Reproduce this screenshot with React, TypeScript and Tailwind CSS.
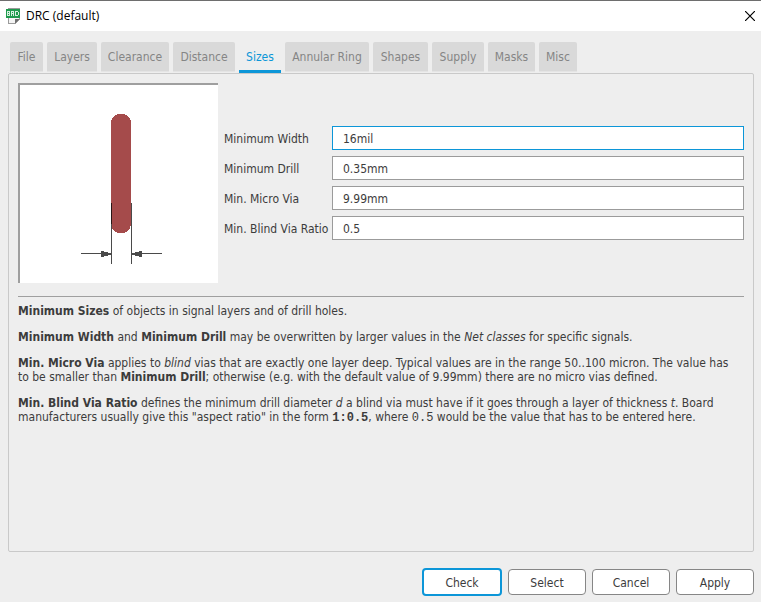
import type { ReactNode } from "react";

const tabs = [
  { name: "File", width: "w-[33px]" },
  { name: "Layers", width: "w-[50px]" },
  { name: "Clearance", width: "w-[68px]" },
  { name: "Distance", width: "w-[62px]" },
  { name: "Sizes", width: "w-[42px]" },
  { name: "Annular Ring", width: "w-[84px]" },
  { name: "Shapes", width: "w-[55px]" },
  { name: "Supply", width: "w-[52px]" },
  { name: "Masks", width: "w-[47px]" },
  { name: "Misc", width: "w-[38px]" },
];

const fields = [
  { id: "min-width", label: "Minimum Width", value: "16mil", focused: true },
  { id: "min-drill", label: "Minimum Drill", value: "0.35mm", focused: false },
  { id: "min-micro-via", label: "Min. Micro Via", value: "9.99mm", focused: false },
  { id: "min-blind-via-ratio", label: "Min. Blind Via Ratio", value: "0.5", focused: false },
];

function BoardIcon() {
  return (
    <svg width="14" height="16" viewBox="0 0 14 16" shapeRendering="crispEdges" aria-hidden="true">
      <path d="M2.5 0.5H13.5V11.5L9.5 15.5H2.5Z" fill="#f4f4f4" stroke="#9a9a9a" />
      <path d="M13 11H9V15Z" fill="#6f6f6f" />
      <rect x="0" y="1" width="14" height="9" fill="#1f9a4d" />
      <g stroke="#d5f0df" fill="none">
        <path d="M1.5 3V8M1 3.5H4M1 5.5H4M1 7.5H4M3.5 3V8" />
        <path d="M5.5 3V8M5 3.5H8M5 5.5H8M7.5 3V5M7.5 6V8" />
        <path d="M9.5 3V8M9 3.5H12M9 7.5H12M12.5 4V7" />
      </g>
    </svg>
  );
}

function WidthDrawing() {
  return (
    <svg width="198" height="198" viewBox="0 0 198 198" aria-label="Track width drawing" role="img">
      <rect x="91" y="29" width="20" height="119" rx="9" fill="#a54b4b" shapeRendering="crispEdges" />
      <g fill="#4a4a4a" shapeRendering="crispEdges">
        <rect x="91" y="118" width="1" height="61" />
        <rect x="111" y="118" width="1" height="61" />
        <rect x="61" y="168" width="30" height="1" />
        <rect x="112" y="168" width="30" height="1" />
        <path d="M81 166H84V167H88V168H91V170H88V171H84V172H81Z" />
        <path d="M122 166H119V167H115V168H112V170H115V171H119V172H122Z" />
        <rect x="91" y="118" width="1" height="21" fill="#2a1616" />
      </g>
    </svg>
  );
}

function DialogButton({ children, primary = false }: { children: ReactNode; primary?: boolean }) {
  return (
    <button
      type="button"
      className={
        primary
          ? "h-7 w-20 rounded border-2 border-[#0c96d8] bg-white pt-0.5"
          : "h-[26px] w-[78px] rounded border border-[#868686] bg-white pt-0.5"
      }
    >
      {children}
    </button>
  );
}

export default function App() {
  return (
    <div className="flex min-h-screen flex-col bg-[#eeeeee] font-['DejaVu_Sans_Condensed','DejaVu_Sans',sans-serif] text-[12px] leading-[14px] text-[#3c3c3c]">
      <header className="flex h-[31px] items-center border-t border-[#6e6e6e] bg-white pl-1.5 pr-1.5 font-['Open_Sans','Noto_Sans',sans-serif] text-black">
        <BoardIcon />
        <h1 className="ml-1.5 grow">DRC (default)</h1>
        <button type="button" aria-label="Close">
          <svg width="10" height="10" viewBox="0 0 10 10" aria-hidden="true">
            <path d="M0 0L10 10M10 0L0 10" stroke="#000" strokeWidth="1.2" />
          </svg>
        </button>
      </header>

      <main className="flex grow flex-col pt-[11px] pr-[7px] pl-2">
        <div role="tablist" className="flex gap-1 px-0.5">
          {tabs.map((tab) => (
            <button
              key={tab.name}
              type="button"
              role="tab"
              aria-selected={tab.name === "Sizes"}
              className={`${tab.width} ${
                tab.name === "Sizes"
                  ? "h-[31px] whitespace-nowrap border-b-3 border-[#0c96d8] pt-0.5 text-[#0c96d8]"
                  : "h-[30px] whitespace-nowrap rounded-t-xs border-b border-[#e4e4e4] bg-[#d9d9d9] text-[#858585]"
              }`}
            >
              {tab.name}
            </button>
          ))}
        </div>

        <section role="tabpanel" className="grow rounded-xs border border-[#c9c9c9] p-[9px]">
          <div className="flex items-center gap-1.5">
            <div className="size-[200px] shrink-0 border-l-2 border-t-2 border-[#9f9f9f] bg-white">
              <WidthDrawing />
            </div>
            <form className="flex grow flex-col gap-1.5">
              {fields.map((field) => (
                <div key={field.id} className="flex items-center">
                  <label htmlFor={field.id} className="w-[108px] shrink-0 whitespace-nowrap pt-0.5">
                    {field.label}
                  </label>
                  <input
                    id={field.id}
                    type="text"
                    defaultValue={field.value}
                    className={
                      field.focused
                        ? "h-6 min-w-0 grow border border-[#0c96d8] bg-white px-2.5 pt-0.5 outline-none"
                        : "h-6 min-w-0 grow border border-[#9b9b9b] bg-white px-2.5 pt-0.5 outline-none"
                    }
                  />
                </div>
              ))}
            </form>
          </div>

          <hr className="mt-[13px] mb-[7px] border-[#9f9f9f]" />

          <div className="flex flex-col gap-3 pr-2">
            <p>
              <b>Minimum Sizes</b> of objects in signal layers and of drill holes.
            </p>
            <p>
              <b>Minimum Width</b> and <b>Minimum Drill</b> may be overwritten by larger values in the <i>Net classes</i> for
              specific signals.
            </p>
            <p>
              <b>Min. Micro Via</b> applies to <i>blind</i> vias that are exactly one layer deep. Typical values are in the
              range 50..100 micron. The value has to be smaller than <b>Minimum Drill</b>; otherwise (e.g. with the default
              value of 9.99mm) there are no micro vias defined.
            </p>
            <p>
              <b>Min. Blind Via Ratio</b> defines the minimum drill diameter <i>d</i> a blind via must have if it goes through
              a layer of thickness <i>t</i>. Board manufacturers usually give this "aspect ratio" in the form{" "}
              <b className="font-['Liberation_Mono',monospace]">1:0.5</b>, where{" "}
              <span className="font-['Liberation_Mono',monospace]">0.5</span> would be the value that has to be entered here.
            </p>
          </div>
        </section>
      </main>

      <footer className="flex items-center justify-end gap-1.5 px-[7px] pt-4 pb-1.5">
        <DialogButton primary>Check</DialogButton>
        <DialogButton>Select</DialogButton>
        <DialogButton>Cancel</DialogButton>
        <DialogButton>Apply</DialogButton>
      </footer>
    </div>
  );
}
